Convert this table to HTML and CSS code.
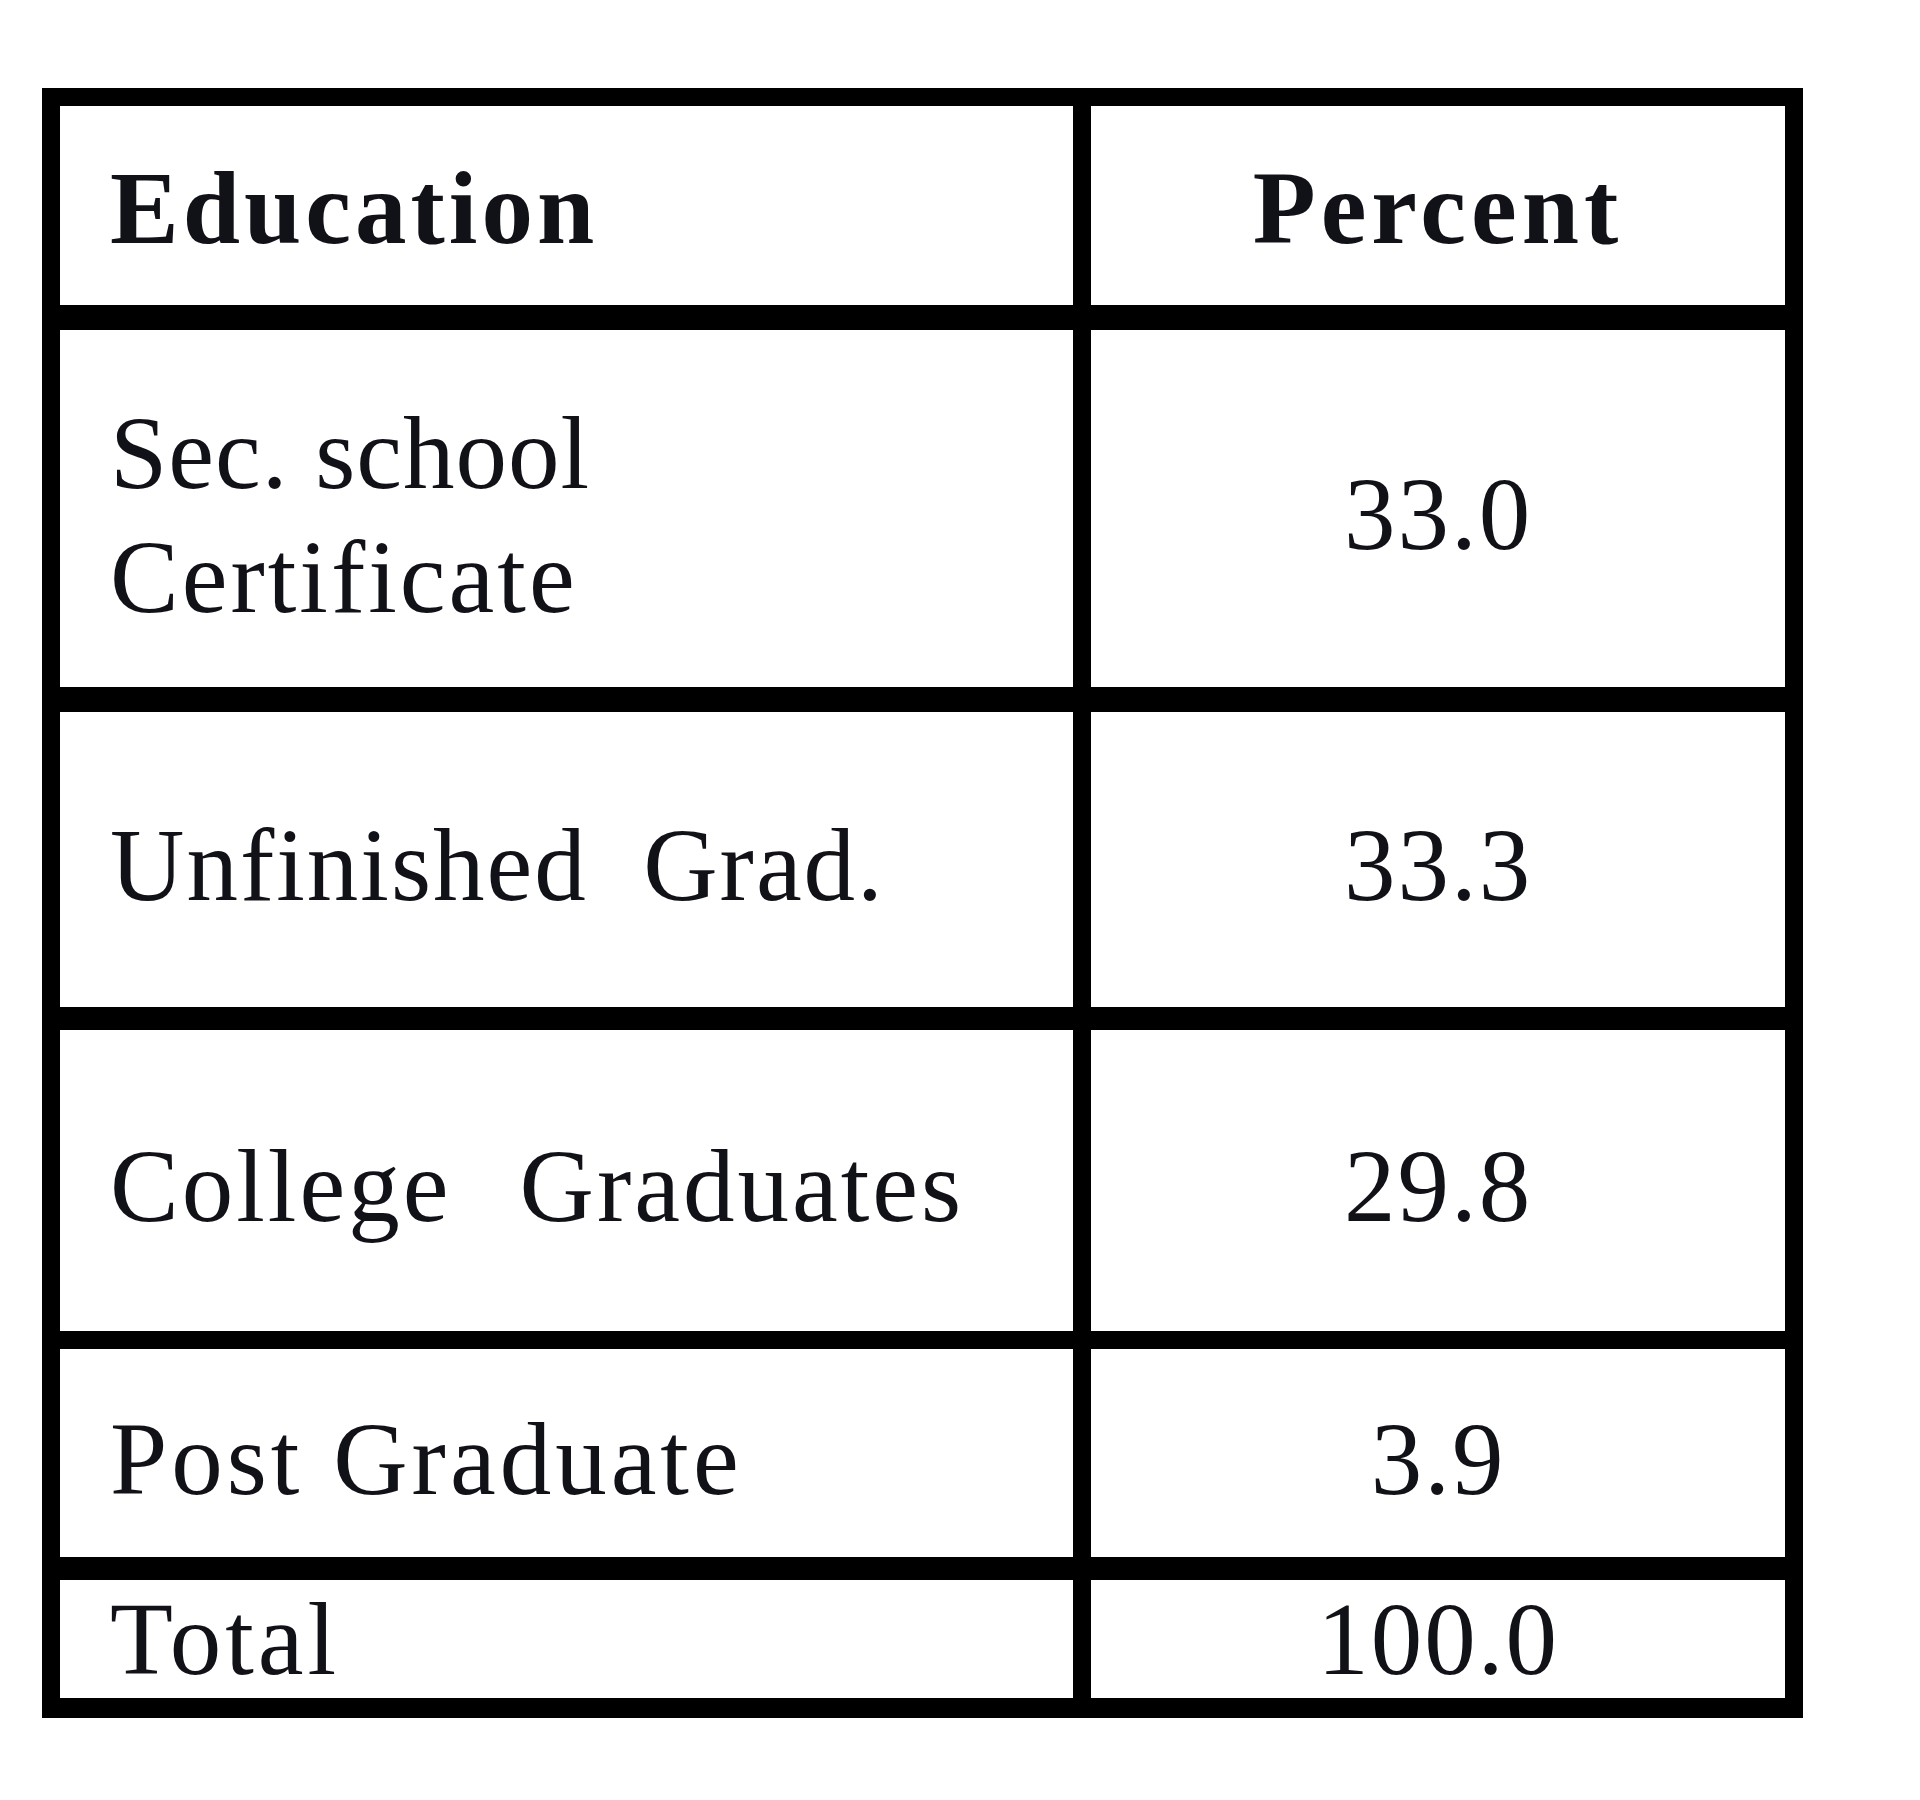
FILE: index.html
```html
<!DOCTYPE html>
<html lang="en">
<head>
<meta charset="utf-8">
<title>Education</title>
<link rel="stylesheet" href="styles.css">
</head>
<body>
<div class="page">
<div class="table">
<div class="cell left head">Education</div>
<div class="cell right head wide">Percent</div>
<div class="cell left r1 two"><span class="tight">Sec. school</span><span class="loose">Certificate</span></div>
<div class="cell right r1">33.0</div>
<div class="cell left r2">Unfinished  Grad.</div>
<div class="cell right r2">33.3</div>
<div class="cell left r3 college">College   Graduates</div>
<div class="cell right r3">29.8</div>
<div class="cell left r4 loose4">Post Graduate</div>
<div class="cell right r4">3.9</div>
<div class="cell left tot loose4">Total</div>
<div class="cell right tot">100.0</div>
</div>
</div>
</body>
</html>
```

FILE: styles.css
```css
body {
  margin: 0;
  background: #ffffff;
}

.page {
  padding: 88px 0 0 42px;
}

.table {
  display: grid;
  grid-template-columns: 1031px 694px;
  width: max-content;
  border: 18px solid #000;
  border-bottom-width: 20px;
  font-family: "Liberation Serif", "Times New Roman", serif;
  font-size: 103px;
  color: #111118;
  letter-spacing: 2px;
}

.cell {
  box-sizing: border-box;
  display: flex;
  flex-direction: column;
  justify-content: center;
  line-height: 103px;
  padding-top: 12px;
  white-space: pre;
  border-bottom: 0 solid #000;
}

.left {
  border-right: 18px solid #000;
  padding-left: 50px;
  align-items: flex-start;
}

.right {
  align-items: center;
}

.head {
  height: 224px;
  border-bottom-width: 25px;
  padding-top: 6px;
  font-weight: bold;
  letter-spacing: 4px;
}

.wide {
  letter-spacing: 5px;
}

.r1 {
  height: 382px;
  border-bottom-width: 25px;
}

.two {
  line-height: 124px;
}

.tight {
  letter-spacing: 1px;
}

.loose {
  letter-spacing: 3px;
}

.r2 {
  height: 318px;
  border-bottom-width: 23px;
}

.r3 {
  height: 319px;
  border-bottom-width: 18px;
}

.college {
  letter-spacing: 3px;
  word-spacing: -6px;
}

.r4 {
  height: 231px;
  border-bottom-width: 23px;
}

.loose4 {
  letter-spacing: 4px;
}

.tot {
  height: 118px;
  border-bottom-width: 0;
  padding-top: 0;
}
```
